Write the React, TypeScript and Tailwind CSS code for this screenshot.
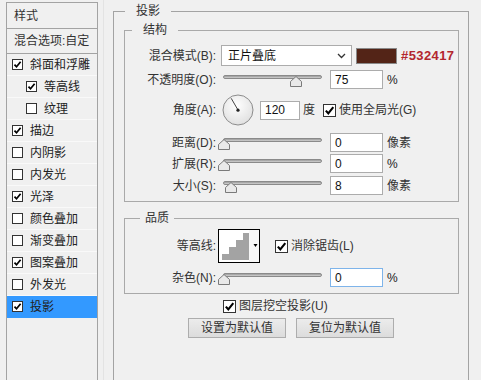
import React from 'react';

const Check = ({ size = 13, checked = true }: { size?: number; checked?: boolean }) => (
  <div
    className="flex items-center justify-center bg-white border border-[#333333] shrink-0"
    style={{ width: size, height: size }}
  >
    {checked && (
      <svg width={size - 2} height={size - 2} viewBox="0 0 11 11">
        <path d="M1.8 5.6 L4.3 8.3 L9.3 2.2" fill="none" stroke="#000" strokeWidth="2.1" />
      </svg>
    )}
  </div>
);

// thumb center is offset from the track start
const Slider = ({ pos }: { pos: number }) => (
  <div className="relative w-[99px] h-[19px] shrink-0">
    <div className="absolute left-0 top-[5px] w-[99px] h-[4px] rounded-[2px] border border-[#8a8a8a] bg-gradient-to-b from-[#9a9a9a] to-[#d2d2d2]" />
    <svg
      className="absolute top-[6px]"
      style={{ left: pos - 7.5 }}
      width="12"
      height="11"
      viewBox="0 0 12 11"
    >
      <path d="M6 0.5 L11.5 5.5 L11.5 10.5 L0.5 10.5 L0.5 5.5 Z" fill="#e9e9e9" stroke="#7a7a7a" />
    </svg>
  </div>
);

const Field = ({ value, w = 53, focus = false }: { value: string; w?: number; focus?: boolean }) => (
  <div
    className={`h-[19px] bg-white border pl-[4px] flex items-center text-[12px] leading-none text-[#111] shrink-0 ${
      focus ? 'border-[#7eb4ea]' : 'border-[#acacac]'
    }`}
    style={{ width: w }}
  >
    {value}
  </div>
);

const Label = ({ children }: { children: React.ReactNode }) => (
  <div className="w-[92px] shrink-0 text-right pr-[1px] text-[#333]">{children}</div>
);

const Dial = () => (
  <svg width="32" height="32" viewBox="0 0 32 32" className="shrink-0">
    <defs>
      <radialGradient id="dialg" cx="45%" cy="35%" r="70%">
        <stop offset="0%" stopColor="#ffffff" />
        <stop offset="100%" stopColor="#dedede" />
      </radialGradient>
    </defs>
    <circle cx="16" cy="16" r="15" fill="url(#dialg)" stroke="#8c8c8c" />
    <line x1="16" y1="16" x2="9.2" y2="4.3" stroke="#444" strokeWidth="1" />
    <circle cx="16" cy="16.2" r="1.6" fill="#222" />
  </svg>
);

const Contour = () => (
  <svg width="42" height="34" viewBox="0 0 42 34" className="shrink-0">
    <rect x="0.5" y="0.5" width="41" height="33" fill="#fff" stroke="#000" />
    <path d="M4 31 L4 25 L11 25 L11 18 L18 18 L18 11 L25 11 L25 4 L31 4 L31 31 Z" fill="#a3a3a3" />
    <rect x="31" y="1" width="10" height="32" fill="#f7f7f7" />
    <path d="M35.5 15 L39.5 15 L37.5 18 Z" fill="#000" />
  </svg>
);

const styles: { name: string; checked: boolean; sub?: boolean; active?: boolean }[] = [
  { name: '斜面和浮雕', checked: true },
  { name: '等高线', checked: true, sub: true },
  { name: '纹理', checked: false, sub: true },
  { name: '描边', checked: true },
  { name: '内阴影', checked: false },
  { name: '内发光', checked: false },
  { name: '光泽', checked: true },
  { name: '颜色叠加', checked: false },
  { name: '渐变叠加', checked: false },
  { name: '图案叠加', checked: true },
  { name: '外发光', checked: false },
  { name: '投影', checked: true, active: true },
];

export default function App() {
  return (
    <div className="w-[481px] h-[380px] bg-[#f0f0f0] flex overflow-hidden font-['Liberation_Sans','Noto_Sans_CJK_SC',sans-serif] text-[12px] leading-[16px] text-[#222]">
      {/* left style list */}
      <div className="ml-[6px] mt-[2px] w-[92px] h-[400px] border border-[#a3a3a3] flex flex-col shrink-0">
        <div className="h-[26px] border-b border-[#a3a3a3] pl-[7px] flex items-center text-[#333]">样式</div>
        <div className="h-[25px] border-b border-[#a3a3a3] pl-[7px] flex items-center text-[#333] whitespace-nowrap">
          混合选项:自定
        </div>
        {styles.map(s => (
          <div
            key={s.name}
            className={`h-[22px] border-b flex items-center whitespace-nowrap ${
              s.sub ? 'pl-[19px]' : 'pl-[5px]'
            } ${s.active ? 'bg-[#3399ff] border-[#3399ff]' : 'border-[#f9f9f9]'}`}
          >
            <Check size={11} checked={s.checked} />
            <span className="ml-[7px] text-[#222]">{s.name}</span>
          </div>
        ))}
      </div>

      <div className="ml-[5px] w-px h-[380px] bg-[#e3e3e3] shrink-0" />

      {/* drop shadow panel */}
      <fieldset className="ml-[9px] mt-[2px] w-[356px] h-[400px] border border-[#a3a3a3] shrink-0">
        <legend className="ml-[11px] px-[11px] leading-[18px] text-[#333]">投影</legend>
        <div className="flex flex-col">
          <fieldset className="mt-[1px] ml-[10px] mr-[9px] border border-[#a9a9a9] pb-[6px]">
            <legend className="ml-[7px] px-[11px] leading-[18px] text-[#333]">结构</legend>
            <div className="flex flex-col">
              <div className="mt-[6px] h-[21px] flex items-center">
                <Label>混合模式(B):</Label>
                <div className="ml-[4px] w-[131px] h-[21px] bg-white border border-[#acacac] flex items-center pl-[6px] pr-[5px] justify-between">
                  <span className="text-[#111]">正片叠底</span>
                  <svg width="9" height="6" viewBox="0 0 9 6">
                    <path d="M1 1 L4.5 4.5 L8 1" fill="none" stroke="#333" strokeWidth="1.3" />
                  </svg>
                </div>
                <div className="ml-[4px] w-[41px] h-[16px] bg-[#532417] border border-[#8a8a8a]" />
                <span className="ml-[4px] text-[13px] font-bold tracking-[0.4px] text-[#b3262e]">#532417</span>
              </div>

              <div className="mt-[4px] h-[19px] flex items-center">
                <Label>不透明度(O):</Label>
                <div className="ml-[6px]">
                  <Slider pos={74} />
                </div>
                <div className="ml-[8px]">
                  <Field value="75" />
                </div>
                <span className="ml-[4px]">%</span>
              </div>

              <div className="mt-[4px] h-[34px] flex items-center">
                <Label>角度(A):</Label>
                <div className="ml-[5px]">
                  <Dial />
                </div>
                <div className="ml-[6px]">
                  <Field value="120" w={40} />
                </div>
                <span className="ml-[3px] text-[#333]">度</span>
                <div className="ml-[8px]">
                  <Check />
                </div>
                <span className="ml-[3px] text-[#333]">使用全局光(G)</span>
              </div>

              <div className="mt-[6px] h-[19px] flex items-center">
                <Label>距离(D):</Label>
                <div className="ml-[6px]">
                  <Slider pos={2} />
                </div>
                <div className="ml-[8px]">
                  <Field value="0" />
                </div>
                <span className="ml-[4px] text-[#333]">像素</span>
              </div>

              <div className="mt-[2px] h-[19px] flex items-center">
                <Label>扩展(R):</Label>
                <div className="ml-[6px]">
                  <Slider pos={2} />
                </div>
                <div className="ml-[8px]">
                  <Field value="0" />
                </div>
                <span className="ml-[4px]">%</span>
              </div>

              <div className="mt-[3px] h-[19px] flex items-center">
                <Label>大小(S):</Label>
                <div className="ml-[6px]">
                  <Slider pos={9} />
                </div>
                <div className="ml-[8px]">
                  <Field value="8" />
                </div>
                <span className="ml-[4px] text-[#333]">像素</span>
              </div>
            </div>
          </fieldset>

          <fieldset className="mt-[7px] ml-[10px] mr-[9px] border border-[#a9a9a9] pb-[6px]">
            <legend className="ml-[15px] px-[5px] leading-[18px] text-[#333]">品质</legend>
            <div className="flex flex-col">
              <div className="mt-[2px] h-[34px] flex items-center">
                <Label>等高线:</Label>
                <div className="ml-[1px]">
                  <Contour />
                </div>
                <div className="ml-[15px]">
                  <Check />
                </div>
                <span className="ml-[3px] text-[#333]">消除锯齿(L)</span>
              </div>
              <div className="mt-[5px] h-[19px] flex items-center">
                <Label>杂色(N):</Label>
                <div className="ml-[6px]">
                  <Slider pos={2} />
                </div>
                <div className="ml-[8px]">
                  <Field value="0" focus />
                </div>
                <span className="ml-[4px]">%</span>
              </div>
            </div>
          </fieldset>

          <div className="mt-[4px] h-[16px] ml-[109px] flex items-center">
            <Check />
            <span className="ml-[3px] text-[#333]">图层挖空投影(U)</span>
          </div>

          <div className="mt-[4px] flex justify-center gap-[10px]">
            <button className="w-[98px] h-[20px] border border-[#adadad] bg-gradient-to-b from-[#ececec] to-[#dcdcdc] text-[#333] leading-none">
              设置为默认值
            </button>
            <button className="w-[98px] h-[20px] border border-[#adadad] bg-gradient-to-b from-[#ececec] to-[#dcdcdc] text-[#333] leading-none">
              复位为默认值
            </button>
          </div>
        </div>
      </fieldset>
    </div>
  );
}
